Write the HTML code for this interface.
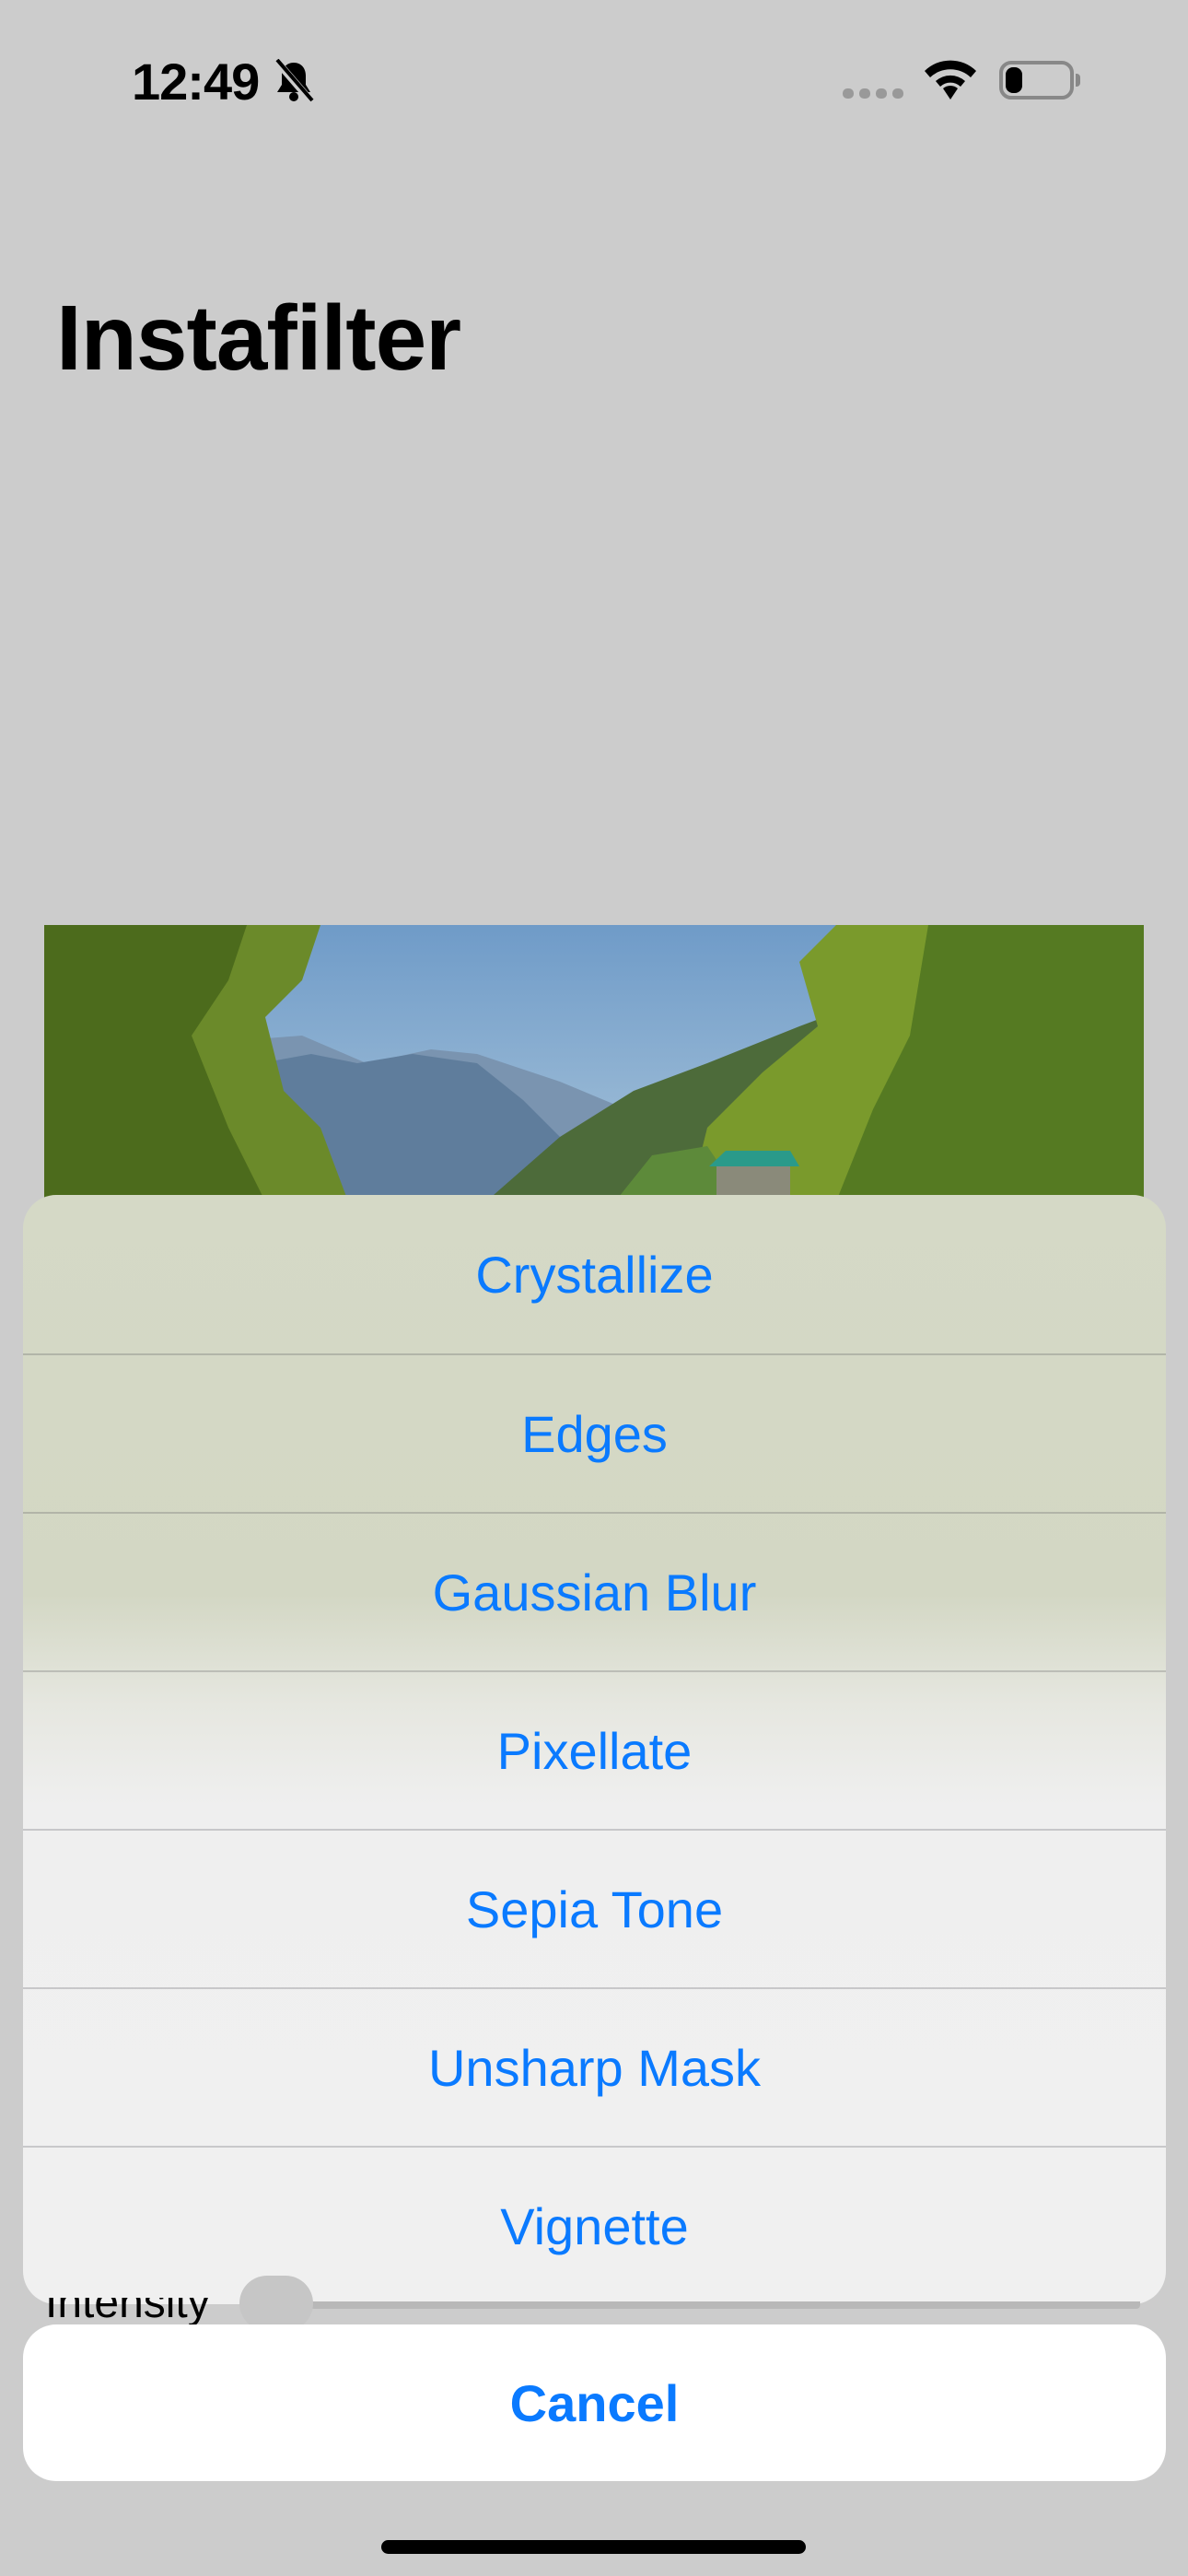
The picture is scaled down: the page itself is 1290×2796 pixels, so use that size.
<!DOCTYPE html>
<html><head><meta charset="utf-8"><style>
*{margin:0;padding:0;box-sizing:border-box}
body{width:1290px;height:2796px;background:#cccccc;position:relative;overflow:hidden;font-family:"Liberation Sans",sans-serif}
.abs{position:absolute}
.row{position:absolute;left:0;width:1241px;height:172px;display:flex;align-items:center;justify-content:center;color:#0a7aff;font-size:56px;border-top:2px solid rgba(60,60,67,0.22)}
</style></head><body>
<div class="abs" style="left:143px;top:56px;font-size:56px;font-weight:bold;letter-spacing:-1px">12:49</div>
<svg class="abs" style="left:296px;top:64px" width="46" height="48" viewBox="0 0 46 48"><path d="M23 4c-8 0-13 6-13 14v10l-5 8h36l-5-8V18c0-8-5-14-13-14z" fill="#000"/><circle cx="23" cy="41" r="5" fill="#000"/><path d="M4 2L42 46" stroke="#ccc" stroke-width="8"/><path d="M5 1L43 45" stroke="#000" stroke-width="4"/></svg>
<div class="abs" style="left:915px;top:96px;width:12px;height:11px;border-radius:5px;background:#999"></div>
<div class="abs" style="left:933px;top:96px;width:12px;height:11px;border-radius:5px;background:#999"></div>
<div class="abs" style="left:951px;top:96px;width:12px;height:11px;border-radius:5px;background:#999"></div>
<div class="abs" style="left:969px;top:96px;width:12px;height:11px;border-radius:5px;background:#999"></div>
<svg class="abs" style="left:1002px;top:64px" width="60" height="44" viewBox="0 0 60 44"><path d="M30 44L22 32a12 12 0 0 1 16 0z" fill="#000"/><path d="M14 24a24 24 0 0 1 32 0l-5 6a16 16 0 0 0-22 0z" fill="#000"/><path d="M2 13a40 40 0 0 1 56 0l-6 7a32 32 0 0 0-44 0z" fill="#000"/></svg>
<div class="abs" style="left:1085px;top:66px;width:81px;height:42px;border:4px solid #888;border-radius:13px"></div>
<div class="abs" style="left:1168px;top:80px;width:5px;height:14px;border-radius:0 4px 4px 0;background:#888"></div>
<div class="abs" style="left:1092px;top:73px;width:18px;height:28px;border-radius:8px;background:#000"></div>
<div class="abs" style="left:61px;top:310px;font-size:100px;font-weight:bold;letter-spacing:-1px">Instafilter</div>
<svg class="abs" style="left:48px;top:1004px" width="1194" height="300" viewBox="0 0 1194 300" preserveAspectRatio="none">
<defs><linearGradient id="sky" x1="0" y1="0" x2="0" y2="1"><stop offset="0" stop-color="#6f9bc8"/><stop offset="1" stop-color="#a8c4da"/></linearGradient></defs>
<rect width="1194" height="300" fill="url(#sky)"/>
<path d="M150 130L280 120 350 150 420 135 470 140 560 170 620 195 600 300 150 300z" fill="#7a94b0"/>
<path d="M180 160L290 140 340 150 400 140 470 150 520 190 560 230 520 300 200 300z" fill="#5f7d9c"/>
<path d="M480 300L560 230 640 180 720 150 820 110 900 80 1000 60 1194 40 1194 300z" fill="#4d6b3a"/>
<path d="M0 0H300L280 60 240 100 260 180 300 220 330 300H0z" fill="#6b8a2a"/>
<path d="M0 0H220L200 60 160 120 200 220 240 300H0z" fill="#4c6b1c"/>
<path d="M860 0H1194V300H700L720 220 780 160 840 110 820 40z" fill="#7a9a2c"/>
<path d="M960 0H1194V300H860L900 200 940 120z" fill="#557a22"/>
<path d="M620 300L660 250 720 240 760 300z" fill="#5d8a3a"/>
<rect x="730" y="255" width="80" height="45" fill="#8a8a7a"/><path d="M722 262L740 245H810L820 262z" fill="#2a9a8a"/>
</svg>
<div class="abs" style="left:25px;top:1297px;width:1241px;height:1204px;border-radius:36px;overflow:hidden;background:linear-gradient(180deg,#d5d9c6 0%,#d3d7c4 36%,#e6e7e0 46%,#efefef 55%,#f0f0f0 100%)">
<div class="row" style="top:0;border-top:none">Crystallize</div>
<div class="row" style="top:172px">Edges</div>
<div class="row" style="top:344px">Gaussian Blur</div>
<div class="row" style="top:516px">Pixellate</div>
<div class="row" style="top:688px">Sepia Tone</div>
<div class="row" style="top:860px">Unsharp Mask</div>
<div class="row" style="top:1032px">Vignette</div>
</div>
<div class="abs" style="left:337px;top:2498px;width:901px;height:8px;background:#b8b8b8;border-radius:0 0 4px 4px"></div>
<div class="abs" style="left:260px;top:2470px;width:80px;height:60px;border-radius:40px;background:#c6c6c6"></div>
<div class="abs" style="left:49px;top:2472px;font-size:48px;color:#000;clip-path:inset(22px 0 0 0)">Intensity</div>
<div class="abs" style="left:25px;top:2523px;width:1241px;height:170px;border-radius:36px;background:#fff;display:flex;align-items:center;justify-content:center;color:#0a7aff;font-size:56px;font-weight:bold">Cancel</div>
<div class="abs" style="left:414px;top:2757px;width:461px;height:15px;border-radius:8px;background:#000"></div>
</body></html>
